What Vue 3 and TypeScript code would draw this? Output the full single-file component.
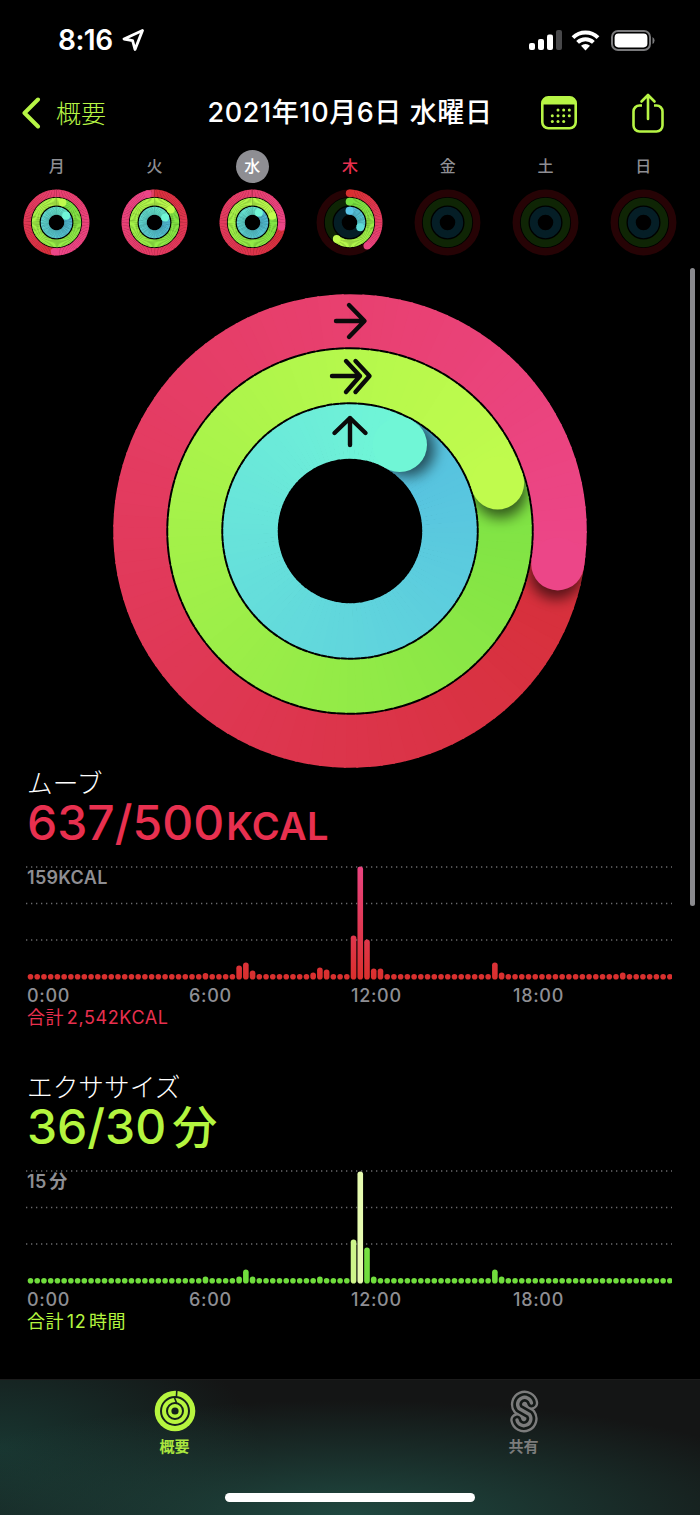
<template>
  <div class="phone">
    <div class="status-bar">
      <div class="status-left">
        <span class="clock">8:16</span>
        <svg class="loc-icon" width="22" height="22" viewBox="0 0 22 22">
          <path d="M20.5 1.5 L2 10 L10.6 11.6 L13 20.5 Z" fill="none" stroke="#fff" stroke-width="2.8" stroke-linejoin="round" />
        </svg>
      </div>
      <div class="status-right">
        <svg class="signal" width="33" height="21" viewBox="0 0 33 21">
          <rect x="0" y="13" width="6" height="7" rx="2" fill="#fff" />
          <rect x="9" y="9" width="6" height="11" rx="2" fill="#fff" />
          <rect x="18" y="4.5" width="6" height="15.5" rx="2" fill="#fff" />
          <rect x="27" y="0" width="6" height="20" rx="2" fill="#48484a" />
        </svg>
        <svg width="29" height="21" viewBox="0 0 29 21">
          <path d="M2 7.6 A18 18 0 0 1 27 7.6" fill="none" stroke="#fff" stroke-width="4" />
          <path d="M6.6 12.4 A11.5 11.5 0 0 1 22.4 12.4" fill="none" stroke="#fff" stroke-width="4" />
          <path d="M14.5 20.5 L10 15.8 A6.5 6.5 0 0 1 19 15.8 Z" fill="#fff" />
        </svg>
        <svg width="44" height="21" viewBox="0 0 44 21">
          <rect x="1" y="1" width="38" height="19" rx="6" fill="none" stroke="#7a7a7c" stroke-width="2" />
          <rect x="3.6" y="3.6" width="32.8" height="13.8" rx="3.8" fill="#fff" />
          <path d="M41.5 7 A4 4 0 0 1 41.5 14 Z" fill="#7a7a7c" />
        </svg>
      </div>
    </div>

    <nav class="nav-bar">
      <div class="nav-back">
        <svg width="20" height="32" viewBox="0 0 20 32">
          <path d="M17 2.5 L3.5 16 L17 29.5" fill="none" stroke="#b7f545" stroke-width="4" stroke-linecap="round" stroke-linejoin="round" />
        </svg>
        <span>概要</span>
      </div>
      <h1 class="nav-title">2021年10月6日 水曜日</h1>
      <div class="nav-actions">
        <svg width="36" height="34" viewBox="0 0 36 34">
          <rect x="1.3" y="1.3" width="33.4" height="31" rx="6" fill="none" stroke="#b7f545" stroke-width="2.6" />
          <path d="M1.3 8.5 V7.3 A6 6 0 0 1 7.3 1.3 H28.7 A6 6 0 0 1 34.7 7.3 V8.5 Z" fill="#b7f545" />
          <circle v-for="dot in calendarDots" :key="dot.x + '-' + dot.y" :cx="dot.x" :cy="dot.y" r="1.5" fill="#b7f545" />
        </svg>
        <svg width="32" height="40" viewBox="0 0 32 40">
          <path d="M10 12.5 H7.5 A6 6 0 0 0 1.5 18.5 V32.5 A6 6 0 0 0 7.5 38.5 H24.5 A6 6 0 0 0 30.5 32.5 V18.5 A6 6 0 0 0 24.5 12.5 H22" fill="none" stroke="#b7f545" stroke-width="2.6" />
          <path d="M16 26 V2 M9.5 8.5 L16 2 L22.5 8.5" fill="none" stroke="#b7f545" stroke-width="2.6" stroke-linecap="round" stroke-linejoin="round" />
        </svg>
      </div>
    </nav>

    <div class="week">
      <div v-for="day in days" :key="day.label" class="day">
        <span class="day-label" :class="{ today: day.today, selected: day.selected }">{{ day.label }}</span>
        <svg class="day-rings" viewBox="-237 -237 474 474">
          <g v-for="ring in day.rings" :key="ring.id">
            <circle :r="ring.r" fill="none" :stroke="ring.track" :stroke-width="ring.w" />
            <path v-for="seg in ring.base" :key="seg.d" :d="seg.d" fill="none" :stroke="seg.color" :stroke-width="ring.w" />
            <circle v-if="ring.cap && !ring.lap" :cx="0" :cy="-ring.r" :r="ring.w / 2" :fill="ring.colors[2]" />
            <path v-for="seg in ring.top" :key="seg.d" :d="seg.d" fill="none" :stroke="seg.color" :stroke-width="ring.w" />
            <circle v-if="ring.cap" :cx="ring.cap.x" :cy="ring.cap.y" :r="ring.w / 2" :fill="ring.colors[3]" />
          </g>
        </svg>
      </div>
    </div>

    <div class="hero">
      <svg class="hero-rings" viewBox="-237 -237 474 474">
        <defs>
          <filter id="blur-hero" x="-100%" y="-100%" width="300%" height="300%">
            <feGaussianBlur stdDeviation="7" />
          </filter>
        </defs>
        <g v-for="ring in heroRings" :key="ring.id">
          <path v-for="seg in ring.base" :key="seg.d" :d="seg.d" fill="none" :stroke="seg.color" :stroke-width="ring.w" />
          <clipPath :id="ring.id"><path :d="ring.clip" clip-rule="evenodd" /></clipPath>
          <g v-if="ring.shadow" :clip-path="'url(#' + ring.id + ')'">
            <circle :cx="ring.shadow.x" :cy="ring.shadow.y" :r="ring.w / 2" fill="#000" fill-opacity="0.6" filter="url(#blur-hero)" />
          </g>
          <path v-for="seg in ring.top" :key="seg.d" :d="seg.d" fill="none" :stroke="seg.color" :stroke-width="ring.w" />
          <circle v-if="ring.cap" :cx="ring.cap.x" :cy="ring.cap.y" :r="ring.w / 2" :fill="ring.colors[3]" />
        </g>
        <g fill="none" stroke="#0a0a0a" stroke-width="4.4" stroke-linecap="round" stroke-linejoin="round">
          <path d="M-14 -210 H14 M-1 -226 L14.5 -210 L-1 -194" />
          <path d="M-18 -155 H10 M-4 -170 L10 -155 L-4 -139 M5.5 -170 L19.5 -155 L5.5 -139" />
          <path d="M0 -86 V-113 M-15.5 -98 L0 -113 L15.5 -98" />
        </g>
      </svg>
    </div>

    <section v-for="chart in charts" :key="chart.id" class="metric">
      <h2 class="metric-title">{{ chart.title }}</h2>
      <p class="metric-value" :class="chart.id">
        {{ chart.value }}<span class="metric-unit" :class="{ cjk: chart.id === 'exercise' }">{{ chart.unit }}</span>
      </p>
      <div class="chart">
        <svg width="646" height="118" viewBox="0 0 646 118">
          <defs>
            <linearGradient :id="'bars-' + chart.id" gradientUnits="userSpaceOnUse" x1="0" y1="116" x2="0" y2="3">
              <stop offset="0" :stop-color="chart.barFrom" />
              <stop offset="1" :stop-color="chart.barTo" />
            </linearGradient>
          </defs>
          <line v-for="y in [3, 39.5, 76]" :key="y" x1="0" x2="646" :y1="y" :y2="y" stroke="#6a6a6c" stroke-width="1.3" stroke-dasharray="1.3 3.7" />
          <rect
            v-for="bar in chart.bars"
            :key="bar.x"
            :x="bar.x"
            :y="chart.bottom - bar.h"
            width="5.6"
            :height="bar.h"
            rx="2.8"
            :fill="bar.fill || 'url(#bars-' + chart.id + ')'"
          />
        </svg>
        <span class="chart-max">{{ chart.max }}</span>
      </div>
      <div class="hours">
        <span v-for="h in hours" :key="h">{{ h }}</span>
      </div>
      <p class="metric-total" :class="chart.id">{{ chart.total }}</p>
    </section>

    <div class="scroll-thumb"></div>

    <footer class="tab-bar">
      <div class="tabs">
        <div class="tab active">
          <svg width="42" height="42" viewBox="0 0 42 42">
            <circle cx="21" cy="21" r="20.3" fill="#b7f53f" />
            <circle cx="21" cy="21" r="14" fill="none" stroke="#14201c" stroke-width="2" />
            <circle cx="21" cy="21" r="8" fill="none" stroke="#14201c" stroke-width="2" />
            <circle cx="21" cy="21" r="3.6" fill="#14201c" />
            <path d="M22.8 0.5 L22.4 7 M20.6 8 L22.8 13.5" fill="none" stroke="#14201c" stroke-width="1.6" />
          </svg>
          <span>概要</span>
        </div>
        <div class="tab">
          <svg width="30" height="44" viewBox="0 0 30 44">
            <g fill="none" stroke-linecap="round" stroke-linejoin="round">
              <path :d="shareCurve" stroke="#7c7c7c" stroke-width="13.5" />
              <path :d="shareCurve" stroke="#141917" stroke-width="8.8" />
              <path :d="shareCurve" stroke="#7c7c7c" stroke-width="3.4" />
            </g>
          </svg>
          <span>共有</span>
        </div>
      </div>
      <div class="home-indicator"></div>
    </footer>
  </div>
</template>

<script setup lang="ts">
const HERO_R = [210.25, 155.25, 99.5]
const HERO_W = [53, 53, 54.5]
const DAY_R = [207, 147.5, 83]
const DAY_W = [52, 54, 56]
const TRACKS = ['#260305', '#0f2505', '#051e26']

type Point = { x: number; y: number }
type Seg = { d: string; color: string }

const shareCurve = 'M22.5 14 A7 7 0 1 0 10 19.5 L20.5 25.5 A7 7 0 1 1 8 31'

const calendarDots: Point[] = [
  { x: 17, y: 14 }, { x: 22.7, y: 14 }, { x: 28.3, y: 14 },
  { x: 11.3, y: 19.7 }, { x: 17, y: 19.7 }, { x: 22.7, y: 19.7 }, { x: 28.3, y: 19.7 },
  { x: 11.3, y: 25.5 }, { x: 17, y: 25.5 }, { x: 22.7, y: 25.5 },
]

const hours = ['0:00', '6:00', '12:00', '18:00']

// base lap start, base lap end, top lap start, top lap end
const RED = ['#d62f39', '#e8406f', '#e8406f', '#ec4688']
const GREEN = ['#7de244', '#b5f84c', '#b5f84c', '#c0fb4d']
const CYAN = ['#55bfe0', '#6ef0d8', '#6ef2d8', '#70f6d6']

function polar(r: number, deg: number): Point {
  const a = ((deg - 90) * Math.PI) / 180
  return { x: r * Math.cos(a), y: r * Math.sin(a) }
}

function arc(r: number, from: number, to: number): string {
  const p0 = polar(r, from)
  const p1 = polar(r, to)
  return `M${p0.x.toFixed(2)} ${p0.y.toFixed(2)} A${r} ${r} 0 0 1 ${p1.x.toFixed(2)} ${p1.y.toFixed(2)}`
}

function mix(c0: string, c1: string, t: number): string {
  const part = (c: string, i: number) => parseInt(c.slice(1 + i * 2, 3 + i * 2), 16)
  const out = [0, 1, 2].map((i) => Math.round(part(c0, i) + (part(c1, i) - part(c0, i)) * t))
  return `rgb(${out.join(',')})`
}

function sweep(r: number, from: number, to: number, c0: string, c1: string): Seg[] {
  const segs: Seg[] = []
  const step = 3
  for (let a = from; a < to; a += step) {
    const end = Math.min(a + step + 0.5, to)
    segs.push({ d: arc(r, a, end), color: mix(c0, c1, Math.min((a + step - from) / (to - from), 1)) })
  }
  return segs
}

function annulus(r: number, w: number): string {
  const o = r + w / 2
  const i = r - w / 2
  return `M${-o} 0 A${o} ${o} 0 1 1 ${o} 0 A${o} ${o} 0 1 1 ${-o} 0 Z M${-i} 0 A${i} ${i} 0 1 1 ${i} 0 A${i} ${i} 0 1 1 ${-i} 0 Z`
}

function buildRing(id: string, idx: number, r: number, w: number, cap: number, lap: boolean, colors: string[]) {
  const endPoint = polar(r, cap)
  const a = (cap * Math.PI) / 180
  return {
    id,
    r,
    w,
    lap,
    colors,
    track: TRACKS[idx],
    clip: annulus(r, w),
    base: lap ? sweep(r, cap - 2, 360, colors[0], colors[1]) : [],
    top: sweep(r, 0, cap, colors[2], colors[3]),
    cap: endPoint,
    shadow: lap ? { x: endPoint.x + Math.cos(a) * 9, y: endPoint.y + Math.sin(a) * 9 } : null,
  }
}

const heroRings = [
  buildRing('hero-0', 0, HERO_R[0], HERO_W[0], 99, true, RED),
  buildRing('hero-1', 1, HERO_R[1], HERO_W[1], 72, true, GREEN),
  buildRing('hero-2', 2, HERO_R[2], HERO_W[2], 30, true, CYAN),
]

function dayRings(d: number, caps: number[] | null, laps: boolean, palette = [RED, GREEN, CYAN]) {
  if (!caps) {
    return DAY_R.map((r, i) => ({
      id: `d${d}-${i}`, r, w: DAY_W[i], lap: false, colors: palette[i], track: TRACKS[i],
      base: [] as Seg[], top: [] as Seg[], cap: null,
    }))
  }
  return caps.map((cap, i) => buildRing(`d${d}-${i}`, i, DAY_R[i], DAY_W[i], cap, laps, palette[i]))
}

const days = [
  { label: '月', rings: dayRings(0, [184, 17, 55], true) },
  { label: '火', rings: dayRings(1, [347, 52, 65], true, [['#e8406f', '#e04060', '#d9303c', '#ec4688'], GREEN, CYAN]) },
  { label: '水', selected: true, rings: dayRings(2, [99, 72, 33], true) },
  {
    label: '木',
    today: true,
    rings: dayRings(3, [143, 218, 114], false, [
      ['', '', '#d9302f', '#ea4480'],
      ['', '', '#76df42', '#c0fb4d'],
      ['', '', '#5bc4e8', '#5fdcd8'],
    ]),
  },
  { label: '金', rings: dayRings(4, null, false) },
  { label: '土', rings: dayRings(5, null, false) },
  { label: '日', rings: dayRings(6, null, false) },
]

function buildBars(tall: Record<number, number>, pale: Record<number, string> = {}) {
  return Array.from({ length: 96 }, (_, i) => ({
    x: 1.7 + 6.73 * i,
    h: tall[i] ?? 5.6,
    fill: pale[i] ?? '',
  }))
}

const charts = [
  {
    id: 'move',
    title: 'ムーブ',
    value: '637/500',
    unit: 'KCAL',
    max: '159KCAL',
    total: '合計 2,542KCAL',
    barFrom: '#d92f2c',
    barTo: '#ea4480',
    bottom: 115.5,
    bars: buildBars({ 26: 6.5, 31: 14, 32: 17, 33: 9, 42: 7, 43: 12, 44: 10, 48: 44, 49: 113, 50: 40, 51: 11, 52: 11, 69: 17, 70: 7, 88: 7 }),
  },
  {
    id: 'exercise',
    title: 'エクササイズ',
    value: '36/30',
    unit: '分',
    max: '15 分',
    total: '合計 12 時間',
    barFrom: '#6fdc3c',
    barTo: '#86e848',
    bottom: 115.5,
    bars: buildBars(
      { 26: 7, 31: 7, 32: 14, 33: 7, 43: 7, 48: 44, 49: 112, 50: 36, 51: 7, 69: 14, 70: 7 },
      { 48: '#cdf58a', 49: '#e6fbb0' },
    ),
  },
]
</script>

<style>
html,
body {
  background: #000;
}
</style>

<style scoped>
.phone {
  position: relative;
  width: 700px;
  height: 1515px;
  overflow: hidden;
  display: flex;
  flex-direction: column;
  background: #000;
  color: #fff;
  font-family: Inter, "Noto Sans CJK JP", sans-serif;
}

.status-bar {
  height: 88px;
  flex: none;
  display: flex;
  justify-content: space-between;
  align-items: flex-start;
  padding: 25px 45px 0 58px;
  box-sizing: border-box;
}

.status-left {
  display: flex;
  align-items: center;
  gap: 9px;
  height: 30px;
}

.clock {
  font-size: 28px;
  line-height: 30px;
  font-weight: 600;
  letter-spacing: -0.5px;
}

.status-right {
  display: flex;
  align-items: center;
  gap: 11px;
  height: 30px;
}

.signal {
  margin-right: -2px;
}

.nav-bar {
  height: 50px;
  flex: none;
  display: grid;
  grid-template-columns: 1fr auto 1fr;
  align-items: center;
}

.nav-back {
  display: flex;
  align-items: center;
  gap: 15px;
  padding-left: 21px;
  color: #b7f545;
  font-size: 25px;
  font-weight: 300;
}

.nav-back span {
  margin-bottom: 2px;
}

.nav-title {
  margin: 0;
  font-size: 27px;
  font-weight: 500;
  letter-spacing: 0.6px;
  line-height: 50px;
  white-space: nowrap;
}

.nav-actions {
  display: flex;
  justify-content: flex-end;
  align-items: center;
  gap: 55px;
  padding-right: 36px;
}

.week {
  flex: none;
  display: grid;
  grid-template-columns: repeat(7, 1fr);
  padding: 12px 8px 0;
}

.day {
  display: flex;
  flex-direction: column;
  align-items: center;
  gap: 6px;
}

.day-label {
  width: 33px;
  height: 33px;
  border-radius: 50%;
  display: flex;
  align-items: center;
  justify-content: center;
  font-size: 16px;
  line-height: 31px;
  padding-bottom: 1px;
  box-sizing: border-box;
  font-weight: 500;
  color: #8e8e93;
}

.day-label.today {
  color: #e8304f;
}

.day-label.selected {
  background: #8e8e93;
  color: #fff;
}

.day-rings {
  width: 67px;
  height: 67px;
  display: block;
}

.hero {
  flex: none;
  display: flex;
  justify-content: center;
  margin-top: 37.5px;
}

.hero-rings {
  width: 474px;
  height: 474px;
  display: block;
}

.metric {
  flex: none;
  padding: 0 28px 0 27px;
}

.metric + .metric {
  margin-top: 44px;
}

.metric-title {
  margin: 2px 0 0;
  font-size: 25.7px;
  line-height: 28px;
  font-weight: 300;
}

.metric-value {
  margin: 0 0 16px;
  height: 50px;
  font-size: 48px;
  line-height: 50px;
  font-weight: 500;
  white-space: nowrap;
}

.metric-value.move,
.metric-total.move {
  color: #e8304f;
}

.metric-value.exercise,
.metric-total.exercise {
  color: #b4f53f;
}

.metric-unit {
  font-size: 38px;
  line-height: 1;
  font-weight: 600;
  margin-left: 2px;
  letter-spacing: 0.3px;
}

.metric-unit.cjk {
  font-size: 45px;
  font-weight: 500;
  margin-left: 6px;
}

.chart {
  position: relative;
  height: 118px;
  margin-left: -1px;
}

.chart svg {
  display: block;
}

.chart-max {
  position: absolute;
  left: 1px;
  top: 3px;
  font-size: 18px;
  line-height: 22px;
  font-weight: 600;
  letter-spacing: 0.3px;
  word-spacing: -2px;
  color: #8e8e93;
}

.hours {
  display: grid;
  grid-template-columns: repeat(4, 162px);
  height: 23px;
  padding-top: 2px;
  margin-bottom: 1px;
  align-items: center;
  font-size: 18px;
  font-weight: 500;
  letter-spacing: 0.7px;
  color: #8e8e93;
}

.metric-total {
  margin: 0;
  font-size: 18px;
  line-height: 20px;
  letter-spacing: 0.6px;
  word-spacing: -3px;
}

.scroll-thumb {
  position: absolute;
  left: 690px;
  top: 268px;
  width: 5px;
  height: 638px;
  border-radius: 3px;
  background: #8a8a8e;
}

.tab-bar {
  margin-top: auto;
  height: 136px;
  flex: none;
  box-sizing: border-box;
  border-top: 1px solid #1c1c1c;
  display: flex;
  flex-direction: column;
  align-items: center;
  background:
    radial-gradient(ellipse 480px 115px at 50% 100%, #1f4840 0%, rgba(31, 72, 64, 0) 100%),
    radial-gradient(ellipse 260px 130px at 0% 50%, #183530 0%, rgba(24, 53, 48, 0) 100%),
    #141515;
}

.tabs {
  width: 698px;
  margin-right: 2px;
  display: grid;
  grid-template-columns: 1fr 1fr;
  padding-top: 9px;
}

.tab {
  display: flex;
  flex-direction: column;
  align-items: center;
  font-size: 15px;
  line-height: 20px;
  font-weight: 700;
  color: #7c7c7c;
}

.tab svg {
  height: 44px;
  margin-bottom: 4px;
}

.tab.active {
  color: #a9e63f;
}

.home-indicator {
  width: 250px;
  height: 9px;
  margin-top: 36px;
  border-radius: 5px;
  background: #fff;
}
</style>
